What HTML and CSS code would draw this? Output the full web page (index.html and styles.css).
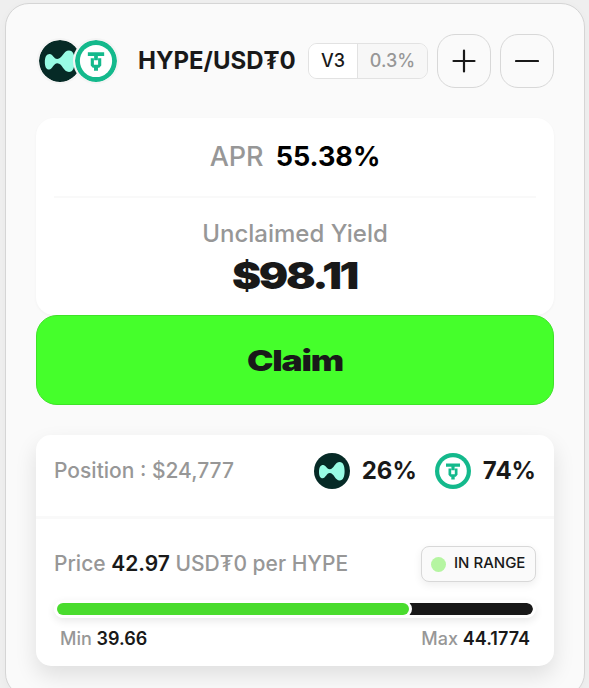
FILE: index.html
```html
<!DOCTYPE html>
<html lang="en">
<head>
<meta charset="utf-8">
<title>HYPE/USD₮0 position</title>
<link rel="stylesheet" href="styles.css">
</head>
<body>
<svg class="defs" width="0" height="0" aria-hidden="true">
  <symbol id="hype" viewBox="0 0 36 36">
    <circle cx="18" cy="18" r="18" fill="#062a26"/>
    <path d="M5 19C5 14.500 6.400 12 9.200 12C11.800 12 12.500 16.200 15.700 16.200C20 16.200 20.800 9 25.700 9C29.200 9 30.600 13 30.600 18C30.600 23.500 29.200 27.500 25.700 27.500C21 27.500 20 20 15.700 20C12.500 20 11.500 25.300 8.700 25.300C6 25.300 5 22.500 5 19Z" fill="#98fce4"/>
  </symbol>
  <symbol id="usdt" viewBox="0 0 36 36">
    <circle cx="18" cy="18" r="18" fill="#14b98c"/>
    <circle cx="18" cy="18" r="13.800" fill="#fff"/>
    <path d="M11 10.600H25V13.800H19.600V17.300H16.400V13.800H11ZM13.500 15.600H16.200V21.200H19.800V15.600H22.500V21.800L20.800 23.700H19.700V26.400H16.300V23.700H15.200L13.500 21.800Z" fill="#14b98c"/>
  </symbol>
</svg>
<main class="panel">
  <header class="head">
    <div class="pair">
      <svg class="coin"><use href="#hype"/></svg>
      <svg class="coin coin-front"><use href="#usdt"/></svg>
    </div>
    <h1 class="title">HYPE/USD₮0</h1>
    <div class="tags"><span class="version">V3</span><span class="fee">0.3%</span></div>
    <button class="square" aria-label="Add"><svg width="24" height="24" viewBox="0 0 24 24"><path d="M1.500 12H22.500M12 1.500V22.500"/></svg></button>
    <button class="square" aria-label="Remove"><svg width="24" height="24" viewBox="0 0 24 24"><path d="M1 12H23"/></svg></button>
  </header>
  <section class="yield">
    <div class="apr"><span>APR</span><strong>55.38%</strong></div>
    <div class="unclaimed">Unclaimed Yield</div>
    <svg class="amount" width="140" height="46"><text x="7" y="36" textLength="125" lengthAdjust="spacingAndGlyphs">$98.11</text></svg>
  </section>
  <button class="claim"><svg width="110" height="42"><text x="7" y="32" textLength="96" lengthAdjust="spacingAndGlyphs">Claim</text></svg></button>
  <section class="position">
    <div class="holdings">
      <span class="value">Position : $24,777</span>
      <svg class="token"><use href="#hype"/></svg><strong class="share">26%</strong>
      <svg class="token"><use href="#usdt"/></svg><strong class="share">74%</strong>
    </div>
    <div class="range">
      <div class="price-row">
        <span class="price">Price <strong>42.97</strong> USD₮0 per HYPE</span>
        <span class="status"><i class="dot"></i><span class="label">IN RANGE</span></span>
      </div>
      <div class="track"><div class="fill"></div></div>
      <div class="limits"><span class="min">Min <strong>39.66</strong></span><span class="max">Max <strong>44.1774</strong></span></div>
    </div>
  </section>
</main>
</body>
</html>
```
FILE: styles.css
```css
* { box-sizing: border-box; }
body {
  margin: 0;
  height: 688px;
  overflow: hidden;
  padding: 3px 4px 0 5px;
  background: #efefef;
  font-family: Inter, "Liberation Sans", sans-serif;
  color: #191919;
}
.defs { display: block; height: 0; }
strong { font-weight: 600; color: #191919; }
button { font: inherit; padding: 0; }
.panel {
  height: 694px;
  padding: 30px;
  border: 1px solid #d5d5d5;
  border-radius: 24px;
  background: #fafafa;
  box-shadow: 0 2px 10px rgba(0, 0, 0, .03);
}
.head { display: flex; align-items: center; height: 54px; }
.pair { display: flex; width: 102px; padding-left: 1px; }
.coin { flex: none; width: 46px; height: 46px; padding: 2px; border-radius: 50%; background: #f4f4f4; }
.coin-front { margin-left: -10px; }
.title { flex: none; width: 170px; margin: 0; font-size: 24px; font-weight: 650; line-height: 30px; }
.tags {
  display: flex;
  flex: none;
  width: 120px;
  height: 36px;
  margin-right: 9px;
  border: 1px solid #e2e2e2;
  border-radius: 9px;
  overflow: hidden;
  font-size: 18px;
  line-height: 34px;
  font-weight: 500;
  text-align: center;
}
.version { width: 49px; background: #fff; border-right: 1px solid #e2e2e2; }
.fee { flex: 1; background: #f7f7f7; color: #979797; }
.square {
  display: flex;
  flex: none;
  align-items: center;
  justify-content: center;
  width: 54px;
  height: 54px;
  border: 1px solid #d8d8d8;
  border-radius: 18px;
  background: #fafafa;
}
.square + .square { margin-left: 9px; }
.square path { fill: none; stroke: #191919; stroke-width: 2.200; stroke-linecap: round; }
.yield {
  display: flex;
  flex-direction: column;
  align-items: center;
  height: 197px;
  margin-top: 30px;
  padding: 0 18px;
  border-radius: 18px;
  background: #fff;
  box-shadow: 0 1px 3px rgba(0, 0, 0, .04);
}
.apr {
  display: flex;
  justify-content: center;
  gap: 12px;
  width: 100%;
  height: 80px;
  padding-top: 21px;
  border-bottom: 2px solid #f9f9f9;
  font-size: 27px;
  line-height: 36px;
  font-weight: 500;
  color: #979797;
}
.apr strong { color: #000; font-weight: 650; }
.unclaimed { margin-top: 20px; font-size: 24px; line-height: 32px; font-weight: 500; color: #979797; }
.amount { margin-top: 3px; }
.amount text { font-size: 37px; font-weight: 900; letter-spacing: -2px; fill: #191919; }
.claim {
  display: flex;
  align-items: center;
  justify-content: center;
  width: 100%;
  height: 90px;
  border: 1px solid #3ee328;
  border-radius: 21px;
  background: #45ff2b;
}
.claim text { font-size: 29px; font-weight: 900; letter-spacing: -1px; fill: #191919; }
.position {
  height: 231px;
  margin-top: 30px;
  border-radius: 15px;
  background: #fff;
  box-shadow: 0 10px 22px rgba(0, 0, 0, .11);
}
.holdings {
  display: flex;
  align-items: center;
  height: 84px;
  padding: 0 18px 10px;
  border-bottom: 3px solid #f9f9f9;
}
.value { margin-right: auto; font-size: 21px; font-weight: 500; color: #979797; }
.token { width: 36px; height: 36px; margin-left: 18px; }
.share { margin-left: 12px; font-size: 24px; font-weight: 650; }
.range { padding: 27px 18px 0; }
.price-row { display: flex; align-items: center; justify-content: space-between; height: 36px; }
.price { padding-bottom: 1px; font-size: 21px; font-weight: 500; color: #979797; }
.status {
  display: flex;
  align-items: center;
  width: 115px;
  height: 36px;
  padding-left: 9px;
  border: 1px solid #d8d8d8;
  border-radius: 8px;
  background: #fafafa;
  box-shadow: 0 3px 8px rgba(0, 0, 0, .07);
  font-size: 15px;
  font-weight: 500;
}
.label { padding-bottom: 3px; }
.dot { width: 15px; height: 15px; margin-right: 8px; border-radius: 50%; background: #b5f5a1; }
.track {
  height: 18px;
  margin-top: 18px;
  border: 3px solid #fff;
  border-radius: 9px;
  background: #191919;
  background-clip: padding-box;
  box-shadow: 0 3px 9px rgba(0, 0, 0, .09);
}
.fill { width: 352px; height: 12px; border-radius: 6px; background: #4adc2e; box-shadow: 0 0 0 3px #fff; }
.limits { display: flex; justify-content: space-between; padding: 9px 6px 0; font-size: 18px; line-height: 24px; font-weight: 500; color: #979797; }
```
